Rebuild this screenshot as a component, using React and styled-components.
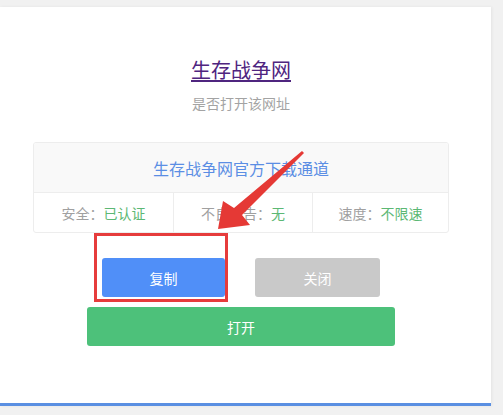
import React from "react";
import styled, { createGlobalStyle } from "styled-components";

const Global = createGlobalStyle`
  html, body { margin: 0; padding: 0; background: #f1f1f1; }
  body { font-family: "Noto Sans CJK SC", "Noto Sans", sans-serif; }
`;

const Page = styled.div`
  position: relative;
  width: 503px;
  height: 415px;
  padding-top: 7px;
  box-sizing: border-box;
  background: #f1f1f1;
  overflow: hidden;
`;

const Card = styled.div`
  width: 491px;
  box-sizing: border-box;
  background: #fff;
  border-bottom: 3px solid #5a8fe2;
  padding: 49px 0 57px 33px;
  box-shadow: 1px 0 3px rgba(0, 0, 0, 0.06);
`;

const Inner = styled.div`
  width: 416px;
  display: flex;
  flex-direction: column;
  align-items: center;
`;

const Title = styled.a`
  font-size: 20px;
  line-height: 28px;
  color: #4f257f;
  text-decoration: underline;
  text-underline-offset: 2px;
  text-decoration-thickness: 2px;
  cursor: pointer;
`;

const Sub = styled.div`
  margin-top: 9px;
  font-size: 14px;
  line-height: 20px;
  color: #a3a3a3;
`;

const InfoBox = styled.div`
  margin-top: 29px;
  width: 100%;
  border: 1px solid #ededed;
  border-radius: 3px;
  box-sizing: border-box;
  overflow: hidden;
`;

const InfoHead = styled.div`
  height: 49px;
  display: flex;
  align-items: center;
  justify-content: center;
  background: #f9f9f9;
  border-bottom: 1px solid #ededed;
  font-size: 16px;
  color: #5b8ee4;
`;

const InfoRow = styled.div`
  display: grid;
  grid-template-columns: 139px 139px 1fr;
  height: 39px;
`;

const Cell = styled.div`
  display: flex;
  align-items: center;
  justify-content: center;
  font-size: 14px;
  color: #a0a0a0;
  border-left: ${(p) => (p.$first ? "none" : "1px solid #ededed")};
`;

const Val = styled.span`
  color: #5cb874;
`;

const BtnRow = styled.div`
  margin-top: 25px;
  display: flex;
  gap: 30px;
`;

const Btn = styled.button`
  width: ${(p) => p.$w}px;
  height: 39px;
  border: none;
  border-radius: 3px;
  background: ${(p) => p.$bg};
  color: #fff;
  font-family: inherit;
  font-size: 14px;
  padding: 0;
  cursor: pointer;
`;

const OpenBtn = styled(Btn)`
  margin-top: 10px;
`;

const Highlight = styled.div`
  position: absolute;
  left: 94px;
  top: 233px;
  width: 134px;
  height: 69px;
  box-sizing: border-box;
  border: 3px solid #e63c3c;
`;

const Arrow = styled.svg`
  position: absolute;
  left: 0;
  top: 0;
  pointer-events: none;
`;

export default function App() {
  return (
    <>
      <Global />
      <Page>
        <Card>
          <Inner>
            <Title>生存战争网</Title>
            <Sub>是否打开该网址</Sub>
            <InfoBox>
              <InfoHead>生存战争网官方下载通道</InfoHead>
              <InfoRow>
                <Cell $first>
                  安全：<Val>已认证</Val>
                </Cell>
                <Cell>
                  不良广告：<Val>无</Val>
                </Cell>
                <Cell>
                  速度：<Val>不限速</Val>
                </Cell>
              </InfoRow>
            </InfoBox>
            <BtnRow>
              <Btn $w={123} $bg="#508ff8">复制</Btn>
              <Btn $w={125} $bg="#c9c9c9">关闭</Btn>
            </BtnRow>
            <OpenBtn $w={308} $bg="#4dc17a">打开</OpenBtn>
          </Inner>
        </Card>
        <Highlight />
        <Arrow width="503" height="415" viewBox="0 0 503 415">
          <polygon
            points="218,229 223,201 234,208 302,151 304,153 242,215 250,225"
            fill="#e53935"
          />
        </Arrow>
      </Page>
    </>
  );
}
